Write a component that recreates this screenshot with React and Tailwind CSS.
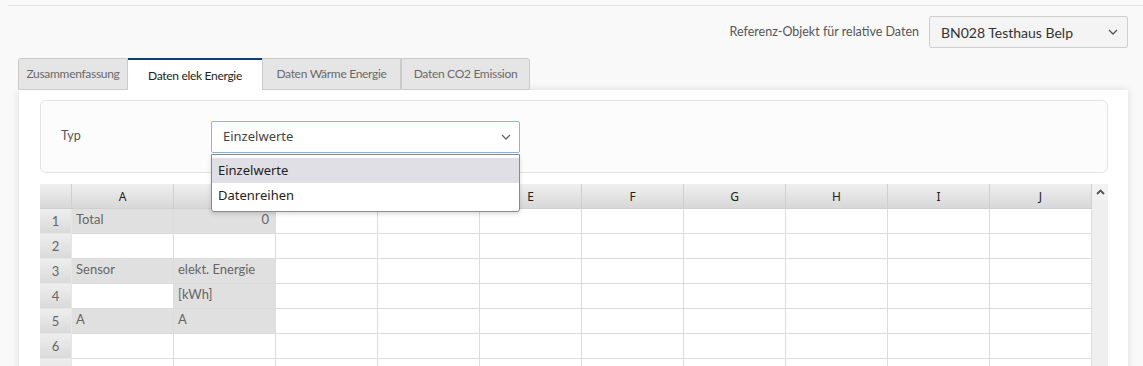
import { useState } from 'react'

const cols = ['A', 'B', 'C', 'D', 'E', 'F', 'G', 'H', 'I', 'J']
const tabs = [
  { t: 'Zusammenfassung', w: 'w-[110px]' },
  { t: 'Daten elek Energie', w: 'w-[134px]' },
  { t: 'Daten Wärme Energie', w: 'w-[139px]' },
  { t: 'Daten CO2 Emission', w: 'w-[129px]' },
]

// cell contents of the first two columns; g = greyed (read-only) cell
const rows = [
  [{ t: 'Total', g: true }, { t: '0', g: true, r: true }],
  [{}, {}],
  [{ t: 'Sensor', g: true }, { t: 'elekt. Energie', g: true }],
  [{}, { t: '[kWh]', g: true }],
  [{ t: 'A', g: true }, { t: 'A', g: true }],
  [{}, {}],
  [{}, {}],
]

function Chevron({ className }) {
  return (
    <svg width="10" height="6" viewBox="0 0 10 6" className={className}>
      <path d="M1 1l4 4 4-4" fill="none" stroke="currentColor" strokeWidth="1.3" />
    </svg>
  )
}

export default function App() {
  const [active, setActive] = useState(1)

  return (
    <div className="h-[366px] overflow-hidden bg-[#f9f9f9] font-['Lato',sans-serif] text-[13px] text-[#555]">
      <div className="ml-[8px] pt-[5px]"><div className="border-t border-[#e2e2e2]" /></div>

      <div className="mt-[10px] flex items-center justify-end pr-[15px]">
        <span className="mr-[10px] text-[12.5px] text-[#555]">Referenz-Objekt für relative Daten</span>
        <div className="flex h-[32px] w-[199px] items-center justify-between rounded-[2px] border border-[#cfcfcf] bg-[#f4f4f4] pl-[11px] pr-[9px] text-[14px] text-[#333]">
          <span>BN028 Testhaus Belp</span>
          <Chevron className="text-[#555]" />
        </div>
      </div>

      <div className="ml-[18px] mt-[10px] flex h-[32px] items-stretch">
        {tabs.map((tab, i) => (
          <button
            key={tab.t}
            onClick={() => setActive(i)}
            className={
              tab.w + ' text-[12px] tracking-[-0.3px] ' +
              (i === active
                ? 'relative z-10 -mb-px border-t-2 border-[#0f3f6e] bg-white text-[#222]'
                : 'border border-[#cbcbcb] bg-[#e5e5e5] text-[#6a6a6a] first:rounded-tl-[3px] last:rounded-tr-[3px]')
            }
          >
            {tab.t}
          </button>
        ))}
      </div>

      <div className="ml-[19px] mr-[15px] h-[300px] bg-white pl-[21px] pr-[20px] pt-[10px] shadow-[0_0_8px_rgba(0,0,0,0.12)]">
        <div className="relative flex h-[73px] items-start rounded-[6px] border border-[#e3e3e3] bg-[#fcfcfc]">
          <span className="ml-[20px] mt-[26px] w-[150px] text-[12.5px] text-[#555]">Typ</span>
          <div className="relative mt-[20px]">
            <div className="flex h-[32px] w-[309px] items-center justify-between rounded-[2px] border border-[#8fb3da] bg-white pl-[11px] pr-[8px] font-['Noto_Sans',sans-serif] text-[13px] text-[#444]">
              <span>Einzelwerte</span>
              <Chevron className="text-[#666]" />
            </div>
            <ul className="absolute left-0 top-[33px] z-20 w-[309px] rounded-b-[3px] border border-[#8a8a8a] bg-white py-[3px] font-['Noto_Sans',sans-serif] text-[13px] text-[#222] shadow-[0_2px_4px_rgba(0,0,0,0.15)]">
              <li className="flex h-[25px] items-center bg-[#e0dfe6] pl-[6px]">Einzelwerte</li>
              <li className="flex h-[25px] items-center pl-[6px]">Datenreihen</li>
            </ul>
          </div>
        </div>

        <div className="mt-[11px] flex">
          <div className="grid grid-cols-[32px_repeat(10,102px)] auto-rows-[25px]">
            <div className="border-r border-b border-[#cfcfcf] bg-gradient-to-b from-[#efefef] to-[#d8d8d8]" />
            {cols.map(c => (
              <div key={c} className="flex items-center justify-center border-r border-b border-[#cfcfcf] bg-gradient-to-b from-[#efefef] to-[#d8d8d8] pt-[2px] font-['Noto_Sans',sans-serif] text-[12px] text-[#222]">
                {c}
              </div>
            ))}
            {rows.map((r, ri) => (
              <div key={ri} className="contents">
                <div className="flex items-end justify-center border-r border-b border-[#e6e6e6] bg-gradient-to-b from-[#eeeeee] to-[#dadada] pb-[2px] text-[#666]">
                  {ri + 1}
                </div>
                {cols.map((c, ci) => {
                  const cell = r[ci] || {}
                  return (
                    <div
                      key={c}
                      className={
                        (cell.g ? 'bg-[#e0e0e0] ' : 'bg-white ') +
                        (cell.r ? 'justify-end pr-[6px] text-[#222] ' : 'pl-[4px] ') +
                        'flex items-start border-r border-b border-[#dcdcdc] pt-[2px] leading-[16px] text-[#666]'
                      }
                    >
                      {cell.t}
                    </div>
                  )
                })}
              </div>
            ))}
          </div>
          <div className="flex w-[16px] flex-col bg-[#efefef]">
            <div className="flex h-[16px] items-center justify-center bg-[#f2f2f2]">
              <svg width="9" height="6" viewBox="0 0 9 6"><path d="M1 5l3.5-3.5L8 5" fill="none" stroke="#555" strokeWidth="1.8" /></svg>
            </div>
          </div>
        </div>
      </div>
    </div>
  )
}
